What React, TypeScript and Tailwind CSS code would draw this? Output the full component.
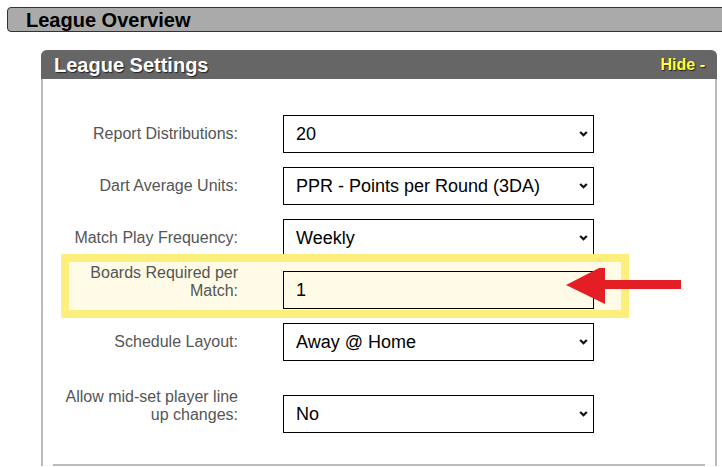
import type { ReactNode } from 'react';

const font = { fontFamily: '"Liberation Sans", Arial, sans-serif' };

function Chevron() {
    return (
        <svg
            className="pointer-events-none absolute right-[6px] top-1/2 -translate-y-1/2"
            width="9"
            height="7"
            viewBox="0 0 9 7"
        >
            <path d="M1.2 1.5 L4.5 4.8 L7.8 1.5" fill="none" stroke="#111" strokeWidth="2.2" />
        </svg>
    );
}

function Field({ value, options, plain }: { value: string; options?: string[]; plain?: boolean }) {
    if (plain) {
        return (
            <input
                readOnly
                value={value}
                className="h-[38px] w-[311px] border border-black bg-transparent px-3 text-[18px] text-black outline-none"
            />
        );
    }
    return (
        <div className="relative w-[311px]">
            <select
                defaultValue={value}
                className="h-[38px] w-full appearance-none border border-black bg-white pl-3 pr-6 text-[18px] text-black outline-none"
            >
                {(options ?? [value]).map((o) => (
                    <option key={o}>{o}</option>
                ))}
            </select>
            <Chevron />
        </div>
    );
}

function Row({ label, children, twoLine, className }: { label: ReactNode; children: ReactNode; twoLine?: boolean; className?: string }) {
    return (
        <div className={`flex items-center ${className ?? ''}`}>
            <label
                className={`ml-[15px] w-[180px] text-right text-[16px] leading-[18px] text-[#555] ${twoLine ? '-translate-y-[8px]' : ''}`}
            >
                {label}
            </label>
            <div className="ml-[45px]">{children}</div>
        </div>
    );
}

export default function App() {
    return (
        <div className="h-[467px] w-[722px] overflow-hidden bg-white" style={font}>
            {/* League Overview bar */}
            <div className="ml-[7px] mt-[7px] flex h-[25px] w-[740px] items-center rounded-[4px] border border-[#333] bg-[#aaaaaa] pl-[18px]">
                <h1 className="text-[20px] font-bold leading-none text-black">League Overview</h1>
            </div>

            {/* League Settings panel */}
            <div className="ml-[41px] mt-[18px] w-[676px] rounded-t-[6px] border-x-2 border-t-2 border-[#bbb]">
                <div className="-mx-[2px] -mt-[2px] flex h-[29px] items-center justify-between rounded-t-[6px] bg-[#666] pl-[13px] pr-[12px]">
                    <h2 className="text-[20px] font-bold text-white [text-shadow:1px_1px_1px_#222]">League Settings</h2>
                    <span className="text-[16px] font-bold text-[#ffff33] [text-shadow:1px_1px_1px_#222]">Hide -</span>
                </div>

                <div className="flex flex-col gap-[14px] pt-[36px]">
                    <Row label="Report Distributions:">
                        <Field value="20" options={['10', '15', '20', '25']} />
                    </Row>
                    <Row label="Dart Average Units:">
                        <Field value="PPR - Points per Round (3DA)" options={['PPR - Points per Round (3DA)', 'PPD - Points per Dart']} />
                    </Row>
                    <Row label="Match Play Frequency:">
                        <Field value="Weekly" options={['Weekly', 'Bi-Weekly', 'Monthly']} />
                    </Row>

                    <div className="relative">
                        {/* highlight annotation */}
                        <div className="absolute left-[18px] top-[-17px] h-[64px] w-[568px] border-[8px] border-[#fdef7c] bg-[#fffbe6]" />
                        <Row label="Boards Required per Match:" twoLine className="relative">
                            <Field value="1" plain />
                        </Row>
                        {/* arrow annotation */}
                        <svg className="absolute left-[523px] top-[-3px]" width="117" height="40" viewBox="0 0 117 40">
                            <polygon points="0,17 39,-3 39,36" fill="#e31e24" />
                            <rect x="38" y="12" width="77" height="9" fill="#e31e24" />
                        </svg>
                    </div>

                    <Row label="Schedule Layout:">
                        <Field value="Away @ Home" options={['Away @ Home', 'Home vs Away']} />
                    </Row>
                    <Row label="Allow mid-set player line up changes:" twoLine className="mt-[20px]">
                        <Field value="No" options={['No', 'Yes']} />
                    </Row>
                </div>

                <div className="mx-[10px] mt-[31px] h-[2px] bg-[#bbb]" />
            </div>
        </div>
    );
}
